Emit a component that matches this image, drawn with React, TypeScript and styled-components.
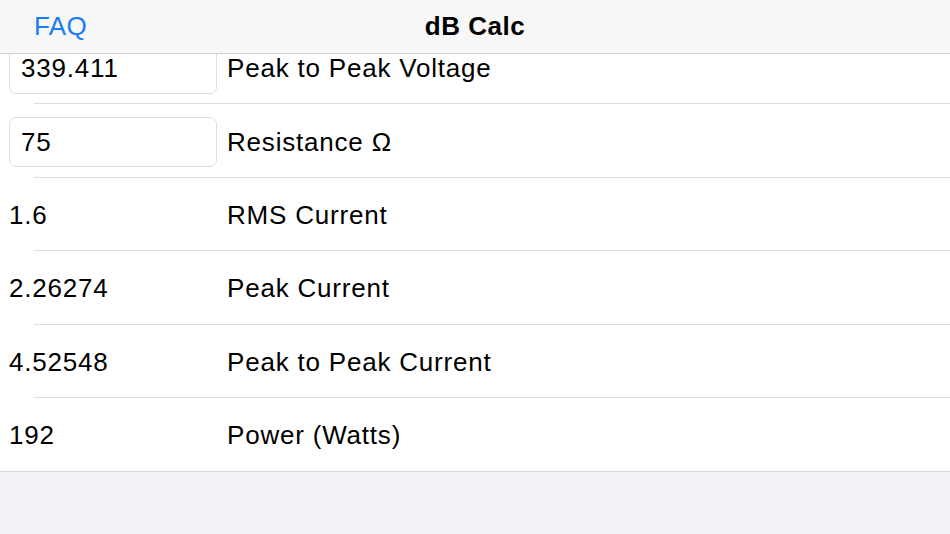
import React, { useLayoutEffect, useRef } from 'react';
import styled, { createGlobalStyle } from 'styled-components';

type RowType = {
    value: string
    label: string
    editable?: boolean
}

const rows: RowType[] = [
    { value: '339.411', label: 'Peak to Peak Voltage', editable: true },
    { value: '75', label: 'Resistance Ω', editable: true },
    { value: '1.6', label: 'RMS Current' },
    { value: '2.26274', label: 'Peak Current' },
    { value: '4.52548', label: 'Peak to Peak Current' },
    { value: '192', label: 'Power (Watts)' },
];

export default function App() {
    const scrollRef = useRef<HTMLDivElement>(null);

    // the table is scrolled a bit in the screenshot
    useLayoutEffect(() => {
        if (scrollRef.current) scrollRef.current.scrollTop = 23;
    }, []);

    return (
        <>
            <GlobalStyle/>
            <Screen>
                <NavBar>
                    <NavButton type="button">FAQ</NavButton>
                    <NavTitle>dB Calc</NavTitle>
                    <span/>
                </NavBar>
                <Scroller ref={scrollRef}>
                    <Table>
                        {rows.map((r) => (
                            <Row key={r.label}>
                                <ValueCell>
                                    {r.editable
                                        ? <Field defaultValue={r.value} inputMode="decimal"/>
                                        : <Value>{r.value}</Value>}
                                </ValueCell>
                                <Label>{r.label}</Label>
                            </Row>
                        ))}
                    </Table>
                    <Filler/>
                </Scroller>
            </Screen>
        </>
    );
}

const GlobalStyle = createGlobalStyle`
  html, body {
    margin: 0;
    padding: 0;
    background: #f2f2f7;
  }
  body {
    font-family: "Liberation Sans", Arial, sans-serif;
    -webkit-font-smoothing: antialiased;
  }
`

const Screen = styled.div`
  width: 950px;
  height: 534px;
  display: flex;
  flex-direction: column;
  background: #f2f2f7;
  overflow: hidden;
`

const NavBar = styled.header`
  flex: 0 0 53px;
  display: grid;
  grid-template-columns: 1fr auto 1fr;
  align-items: center;
  background: #f7f7f7;
  border-bottom: 1px solid #d3d3d3;
  padding-left: 34px;
`

const NavButton = styled.button`
  justify-self: start;
  border: none;
  background: none;
  padding: 0;
  margin-top: -1px;
  font-family: "Liberation Sans", Arial, sans-serif;
  font-size: 26px;
  color: #1a7cf5;
  letter-spacing: 0.3px;
  cursor: pointer;
`

const NavTitle = styled.h1`
  margin: -1px 0 0 -34px;
  font-size: 26px;
  font-weight: 700;
  letter-spacing: 0.5px;
  color: #000;
`

const Scroller = styled.div`
  flex: 1;
  overflow-y: auto;
  scrollbar-width: none;

  &::-webkit-scrollbar {
    display: none;
  }
`

const Table = styled.div`
  background: #fff;
  border-bottom: 1px solid #d8d8d8;
`

const Row = styled.div`
  position: relative;
  height: 73.4px;
  box-sizing: border-box;
  padding-top: 2px;
  display: flex;
  align-items: center;

  &:not(:last-child)::after {
    content: "";
    position: absolute;
    left: 34px;
    right: 0;
    bottom: 0;
    height: 1px;
    background: #dcdcdc;
  }
`

const ValueCell = styled.div`
  width: 208px;
  margin-left: 9px;
  flex-shrink: 0;
`

const Field = styled.input`
  box-sizing: border-box;
  width: 100%;
  height: 50px;
  padding: 0 11px;
  border: 1px solid #dedede;
  border-radius: 7px;
  background: #fff;
  font-family: "Liberation Sans", Arial, sans-serif;
  font-size: 26px;
  letter-spacing: 0.8px;
  color: #000;
  outline: none;
`

const Value = styled.span`
  font-size: 26px;
  letter-spacing: 0.8px;
  color: #000;
`

const Label = styled.span`
  margin-left: 10px;
  font-size: 26px;
  letter-spacing: 0.8px;
  color: #000;
`

const Filler = styled.div`
  height: 120px;
`
